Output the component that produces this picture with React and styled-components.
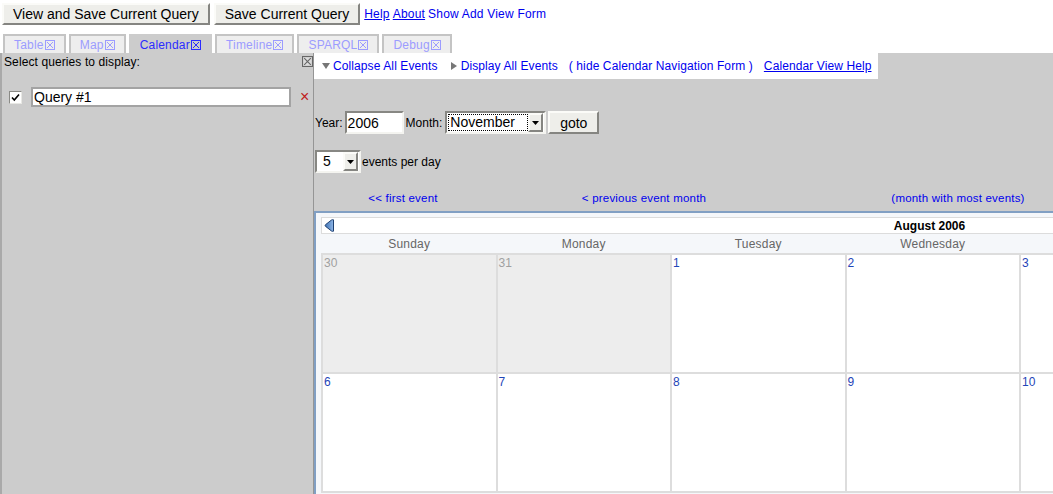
import React from 'react';
import styled, { createGlobalStyle } from 'styled-components';

const GlobalStyle = createGlobalStyle`
    html, body {
        margin: 0;
        padding: 0;
        background: #fff;
        overflow: hidden;
    }
    body {
        font-family: "Liberation Sans", Arial, sans-serif;
    }
`;

const Page = styled.div`
    width: 1053px;
    height: 494px;
    display: flex;
    flex-direction: column;
    overflow: hidden;
`;

const TopBar = styled.div`
    display: flex;
    align-items: center;
    gap: 4px;
    padding: 3px 0 0 2px;
    height: 22px;
`;

const RaisedButton = styled.button`
    height: ${p => p.$h || 22}px;
    padding: 0 ${p => p.$pad || 9}px;
    font-family: "Liberation Sans", Arial, sans-serif;
    font-size: 14px;
    color: #000;
    background: #eeeeea;
    border: 2px solid;
    border-color: #fbfbf8 #858581 #858581 #fbfbf8;
    box-sizing: border-box;
    display: inline-flex;
    align-items: center;
    justify-content: center;
    cursor: pointer;
`;

const TopLink = styled.a`
    font-size: 12px;
    letter-spacing: 0.2px;
    color: #0000ee;
    text-decoration: ${p => (p.$plain ? 'none' : 'underline')};
    cursor: pointer;
`;

const TopLinks = styled.div`
    display: flex;
    gap: 3px;
    align-items: center;
`;

const Tabs = styled.div`
    display: flex;
    gap: 3px;
    margin-top: 9px;
    padding-left: 3px;
    height: 19px;
`;

const Tab = styled.div`
    display: flex;
    align-items: center;
    gap: 1px;
    padding: 1px 9px 0 9px;
    box-sizing: border-box;
    height: 19px;
    font-size: 12px;
    letter-spacing: 0.2px;
    color: ${p => (p.$active ? '#2b2bff' : '#9c9cff')};
    background: ${p => (p.$active ? '#cccccc' : '#eeeeee')};
    border: 2px solid ${p => (p.$active ? '#cccccc' : '#c4c4c4')};
    border-bottom: none;
`;

const Main = styled.div`
    display: flex;
    height: 441px;
`;

const LeftPanel = styled.div`
    width: 314px;
    box-sizing: border-box;
    background: #cccccc;
    border-left: 2px solid #a9a9a9;
    border-right: 1px solid #959595;
    display: flex;
    flex-direction: column;
`;

const PanelHeader = styled.div`
    display: flex;
    justify-content: space-between;
    align-items: center;
    padding: 2px 0 0 2px;
    height: 13px;
    font-size: 12px;
    letter-spacing: 0.1px;
    color: #000;
`;

const QueryRow = styled.div`
    display: flex;
    align-items: center;
    margin-top: 19px;
    padding-left: 7px;
    height: 20px;
`;

const CheckBox = styled.span`
    width: 13px;
    height: 13px;
    box-sizing: border-box;
    background: #fff;
    border: 1px solid;
    border-color: #8a8a86 #e8e8e4 #e8e8e4 #8a8a86;
    display: flex;
    align-items: center;
    justify-content: center;
`;

const QueryInput = styled.div`
    margin-left: 9px;
    width: 260px;
    height: 20px;
    box-sizing: border-box;
    background: #fff;
    border: 2px solid #a3a3a3;
    font-size: 14px;
    line-height: 16px;
    padding-left: 1px;
    color: #000;
`;

const RemoveMark = styled.span`
    margin-left: 9px;
    color: #c02020;
    font-size: 16px;
    line-height: 1;
`;

const RightPanel = styled.div`
    flex: 1;
    background: #cccccc;
    overflow: hidden;
    display: flex;
    flex-direction: column;
`;

const LinksBar = styled.div`
    align-self: flex-start;
    display: flex;
    align-items: center;
    height: 26px;
    width: 564px;
    box-sizing: border-box;
    padding-left: 8px;
    background: #fff;
    font-size: 12px;
    letter-spacing: 0.1px;
`;

const BarLink = styled.a`
    color: #0000ee;
    text-decoration: ${p => (p.$underline ? 'underline' : 'none')};
    margin-left: ${p => p.$gap || 0}px;
    cursor: pointer;
    white-space: nowrap;
`;

const FormRow = styled.div`
    display: flex;
    align-items: center;
    height: 23px;
    margin-top: ${p => p.$top}px;
    padding-left: 1px;
    font-size: 12px;
    color: #000;
`;

const Label = styled.span`
    margin: 0 ${p => p.$right || 2}px 0 ${p => p.$left || 0}px;
`;

const InsetField = styled.div`
    width: ${p => p.$w}px;
    height: 23px;
    box-sizing: border-box;
    background: #fff;
    border: 2px solid;
    border-color: #878783 #f4f4f0 #f4f4f0 #878783;
    display: flex;
    align-items: center;
    font-size: 14px;
    padding: 0 1px;
`;

const SelectValue = styled.span`
    flex: 1;
    height: 17px;
    line-height: 17px;
    padding-left: ${p => p.$pad || 2}px;
    outline: ${p => (p.$focus ? '1px dotted #000' : 'none')};
    outline-offset: -1px;
`;

const ArrowButton = styled.span`
    width: 15px;
    height: 19px;
    box-sizing: border-box;
    background: #eeeeea;
    border: 2px solid;
    border-color: #fbfbf8 #858581 #858581 #fbfbf8;
    display: flex;
    align-items: center;
    justify-content: center;
`;

const NavRow = styled.div`
    display: grid;
    grid-template-columns: 178px 304px 324px;
    height: 18px;
    margin-top: 16px;
    align-items: center;
    font-size: 11.5px;
    letter-spacing: 0.2px;
`;

const NavLink = styled.a`
    color: #0000ee;
    text-align: center;
    cursor: pointer;
`;

const Calendar = styled.div`
    margin-top: 4px;
    align-self: flex-start;
    flex: 1;
    background: #f5f7fa;
    border-top: 2px solid #819fc3;
    border-left: 2px solid #819fc3;
    padding: 4px 0 0 5px;
`;

const MonthHeader = styled.div`
    width: 1223px;
    height: 17px;
    box-sizing: border-box;
    background: #fff;
    border: 1px solid #dcdcdc;
    display: grid;
    grid-template-columns: 20px 1fr 20px;
    align-items: center;
    font-size: 12px;
    font-weight: bold;
    color: #000;
`;

const MonthTitle = styled.span`
    text-align: center;
    margin-left: -6px;
`;

const DayNames = styled.div`
    display: grid;
    grid-template-columns: repeat(7, 172.5px);
    gap: 2px;
    padding: 0 2px;
    height: 19px;
    align-items: center;
    font-size: 12px;
    letter-spacing: 0.2px;
    color: #666;
`;

const DayName = styled.span`
    text-align: center;
`;

const Grid = styled.div`
    display: grid;
    grid-template-columns: repeat(7, 172.5px);
    grid-auto-rows: 117px;
    gap: 2px;
    padding: 2px;
    background: #dddddd;
    width: max-content;
`;

const Cell = styled.div`
    background: ${p => (p.$other ? '#ededed' : '#ffffff')};
    color: ${p => (p.$other ? '#a0a0a0' : '#1f45b8')};
    font-size: 12px;
    line-height: 14px;
    padding: 1px 1px;
`;

const XBox = ({ color = '#9c9cff', size = 10, fill = 'none' }) => (
    <svg width={size} height={size} viewBox="0 0 10 10" style={{ display: 'block', flex: 'none' }}>
        <rect x="0.5" y="0.5" width="9" height="9" fill={fill} stroke={color} />
        <path d="M2 2 L8 8 M8 2 L2 8" stroke={color} strokeWidth="1" />
    </svg>
);

const Tri = ({ dir }) => (
    <svg width="8" height="8" viewBox="0 0 8 8" style={{ display: 'block', flex: 'none' }}>
        {dir === 'down'
            ? <polygon points="0,1 8,1 4,7" fill="#777" />
            : <polygon points="1,0 7,4 1,8" fill="#777" />}
    </svg>
);

const DropArrow = () => (
    <svg width="7" height="4" viewBox="0 0 7 4" style={{ display: 'block' }}>
        <polygon points="0,0 7,0 3.5,4" fill="#000" />
    </svg>
);

const PrevArrow = () => (
    <svg width="11" height="13" viewBox="0 0 11 13" style={{ display: 'block', marginLeft: 2 }}>
        <defs>
            <linearGradient id="pa" x1="0" y1="0" x2="1" y2="0">
                <stop offset="0" stopColor="#3f73b5" />
                <stop offset="1" stopColor="#8fb6e6" />
            </linearGradient>
        </defs>
        <path d="M9.5 0.8 L9.5 12.2 Q8.5 12.6 7.5 12 L1.5 7.3 Q0.8 6.5 1.5 5.7 L7.5 1 Q8.5 0.4 9.5 0.8 Z" fill="url(#pa)" stroke="#1d3f70" strokeWidth="1" />
    </svg>
);

const CheckMark = () => (
    <svg width="9" height="9" viewBox="0 0 9 9" style={{ display: 'block' }}>
        <path d="M1 4.5 L3.3 7 L8 1.5" fill="none" stroke="#000" strokeWidth="1.6" />
    </svg>
);

const tabs = ['Table', 'Map', 'Calendar', 'Timeline', 'SPARQL', 'Debug'];
const dayNames = ['Sunday', 'Monday', 'Tuesday', 'Wednesday', 'Thursday', 'Friday', 'Saturday'];
const days = [
    { n: 30, other: true }, { n: 31, other: true }, { n: 1 }, { n: 2 }, { n: 3 }, { n: 4 }, { n: 5 },
    { n: 6 }, { n: 7 }, { n: 8 }, { n: 9 }, { n: 10 }, { n: 11 }, { n: 12 },
];

const App = () => {
    return (
        <Page>
            <GlobalStyle />
            <TopBar>
                <RaisedButton>View and Save Current Query</RaisedButton>
                <RaisedButton>Save Current Query</RaisedButton>
                <TopLinks>
                    <TopLink>Help</TopLink>
                    <TopLink>About</TopLink>
                    <TopLink $plain>Show Add View Form</TopLink>
                </TopLinks>
            </TopBar>

            <Tabs>
                {tabs.map(t => (
                    <Tab key={t} $active={t === 'Calendar'}>
                        {t}
                        <XBox color={t === 'Calendar' ? '#2b2bff' : '#9c9cff'} />
                    </Tab>
                ))}
            </Tabs>

            <Main>
                <LeftPanel>
                    <PanelHeader>
                        <span>Select queries to display:</span>
                        <XBox color="#666" size={11} fill="#dcdcdc" />
                    </PanelHeader>
                    <QueryRow>
                        <CheckBox><CheckMark /></CheckBox>
                        <QueryInput>Query #1</QueryInput>
                        <RemoveMark>×</RemoveMark>
                    </QueryRow>
                </LeftPanel>

                <RightPanel>
                    <LinksBar>
                        <Tri dir="down" />
                        <BarLink $gap={3}>Collapse All Events</BarLink>
                        <span style={{ width: 12 }} />
                        <Tri dir="right" />
                        <BarLink $gap={3}>Display All Events</BarLink>
                        <BarLink $gap={11}>( hide Calendar Navigation Form )</BarLink>
                        <BarLink $gap={11} $underline>Calendar View Help</BarLink>
                    </LinksBar>

                    <FormRow $top={32}>
                        <Label>Year:</Label>
                        <InsetField $w={59}>2006</InsetField>
                        <Label $left={2} $right={3}>Month:</Label>
                        <InsetField $w={101}>
                            <SelectValue $focus>November</SelectValue>
                            <ArrowButton><DropArrow /></ArrowButton>
                        </InsetField>
                        <RaisedButton $h={23} $pad={0} style={{ width: 51, marginLeft: 2 }}>goto</RaisedButton>
                    </FormRow>

                    <FormRow $top={16}>
                        <InsetField $w={46}>
                            <SelectValue $pad={5}>5</SelectValue>
                            <ArrowButton><DropArrow /></ArrowButton>
                        </InsetField>
                        <Label $left={1}>events per day</Label>
                    </FormRow>

                    <NavRow>
                        <NavLink>&lt;&lt; first event</NavLink>
                        <NavLink>&lt; previous event month</NavLink>
                        <NavLink>(month with most events)</NavLink>
                    </NavRow>

                    <Calendar>
                        <MonthHeader>
                            <PrevArrow />
                            <MonthTitle>August 2006</MonthTitle>
                            <span />
                        </MonthHeader>
                        <DayNames>
                            {dayNames.map(d => <DayName key={d}>{d}</DayName>)}
                        </DayNames>
                        <Grid>
                            {days.map(d => (
                                <Cell key={d.n + (d.other ? 'o' : '')} $other={d.other}>{d.n}</Cell>
                            ))}
                        </Grid>
                    </Calendar>
                </RightPanel>
            </Main>
        </Page>
    );
};

export default App;
